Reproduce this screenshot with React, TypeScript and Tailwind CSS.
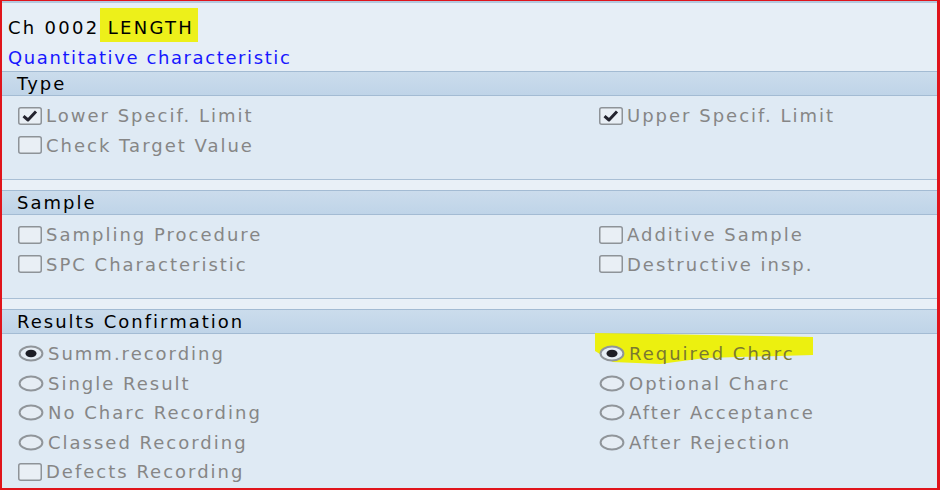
import React from "react";

const font = { fontFamily: '"DejaVu Sans", Verdana, sans-serif' };

function CheckBox({ checked }: { checked?: boolean }) {
  return (
    <svg width="24" height="18" viewBox="0 0 24 18" className="shrink-0">
      <rect x="0.75" y="0.75" width="22.5" height="16.5" rx="2" fill="#e9eff5" stroke="#8e9398" strokeWidth="1.5" />
      {checked && <path d="M5.5 9.2 L10 13 L18 4.5" fill="none" stroke="#23232e" strokeWidth="3" strokeLinejoin="round" />}
    </svg>
  );
}

function Radio({ checked }: { checked?: boolean }) {
  return (
    <svg width="26" height="17" viewBox="0 0 26 17" className="shrink-0">
      <ellipse cx="13" cy="8.5" rx="11.4" ry="7" fill="#e6edf4" stroke="#90959a" strokeWidth="2" />
      {checked && <ellipse cx="13" cy="8.5" rx="5.5" ry="3.8" fill="#1d1d24" />}
    </svg>
  );
}

function Row({ kind, checked, label, highlight }: { kind: "cb" | "rb"; checked?: boolean; label: string; highlight?: boolean }) {
  return (
    <div className="relative flex h-[29.5px] items-center">
      {highlight && (
        <svg className="absolute left-[-4px] top-[-6px]" width="222" height="34" viewBox="0 0 222 34">
          <polygon points="0,0 60,1 218,4 218,22 110,25 65,31 18,29 0,18" fill="#ecf00f" />
        </svg>
      )}
      <div className="relative flex items-center">
        {kind === "cb" ? <CheckBox checked={checked} /> : <Radio checked={checked} />}
        <span className={`ml-[4px] text-[18px] tracking-[2px] ${highlight ? "text-[#7a7930]" : "text-[#868686]"}`}>{label}</span>
      </div>
    </div>
  );
}

function Header({ title }: { title: string }) {
  return (
    <div className="flex h-[25px] items-center border-y border-[#a3bbd3] bg-gradient-to-b from-[#cbdcec] to-[#bfd4e8] pl-[15px] text-[18px] tracking-[2px] text-black">
      {title}
    </div>
  );
}

function Strip() {
  return <div className="h-[11px] border-t border-[#a9bfd5] bg-[#e9f0f7]" />;
}

export default function App() {
  return (
    <div
      className="box-border h-[490px] w-[940px] overflow-hidden border-b-2 border-l-2 border-r-[3px] border-t border-b-[#e0141b] border-l-[#e0141b] border-r-[#e0141b] border-t-[#e0141b] bg-[#dfeaf4]"
      style={font}
    >
      <div className="h-[70px] border-t-2 border-[#b4c8de] bg-[#e6eef6] pl-[6px]">
        <div className="flex h-[39px] items-end text-[18px] tracking-[2.3px] text-black">
          <span className="pb-[1px]">Ch 0002</span>
          <span className="whitespace-pre bg-[#edf01a] pb-[1px] pr-[4px] pt-[6px]"> LENGTH</span>
        </div>
        <div className="mt-[2px] text-[18px] tracking-[1.6px] text-[#1717ff]">Quantitative characteristic</div>
      </div>

      <Header title="Type" />
      <div className="flex h-[83px] pt-[5px]">
        <div className="w-[597px] pl-[16px]">
          <Row kind="cb" checked label="Lower Specif. Limit" />
          <Row kind="cb" label="Check Target Value" />
        </div>
        <div className="flex-1">
          <Row kind="cb" checked label="Upper Specif. Limit" />
        </div>
      </div>
      <Strip />

      <Header title="Sample" />
      <div className="flex h-[83px] pt-[5px]">
        <div className="w-[597px] pl-[16px]">
          <Row kind="cb" label="Sampling Procedure" />
          <Row kind="cb" label="SPC Characteristic" />
        </div>
        <div className="flex-1">
          <Row kind="cb" label="Additive Sample" />
          <Row kind="cb" label="Destructive insp." />
        </div>
      </div>
      <Strip />

      <Header title="Results Confirmation" />
      <div className="flex pt-[5px]">
        <div className="w-[597px] pl-[16px]">
          <Row kind="rb" checked label="Summ.recording" />
          <Row kind="rb" label="Single Result" />
          <Row kind="rb" label="No Charc Recording" />
          <Row kind="rb" label="Classed Recording" />
          <Row kind="cb" label="Defects Recording" />
        </div>
        <div className="flex-1">
          <Row kind="rb" checked label="Required Charc" highlight />
          <Row kind="rb" label="Optional Charc" />
          <Row kind="rb" label="After Acceptance" />
          <Row kind="rb" label="After Rejection" />
        </div>
      </div>
    </div>
  );
}
